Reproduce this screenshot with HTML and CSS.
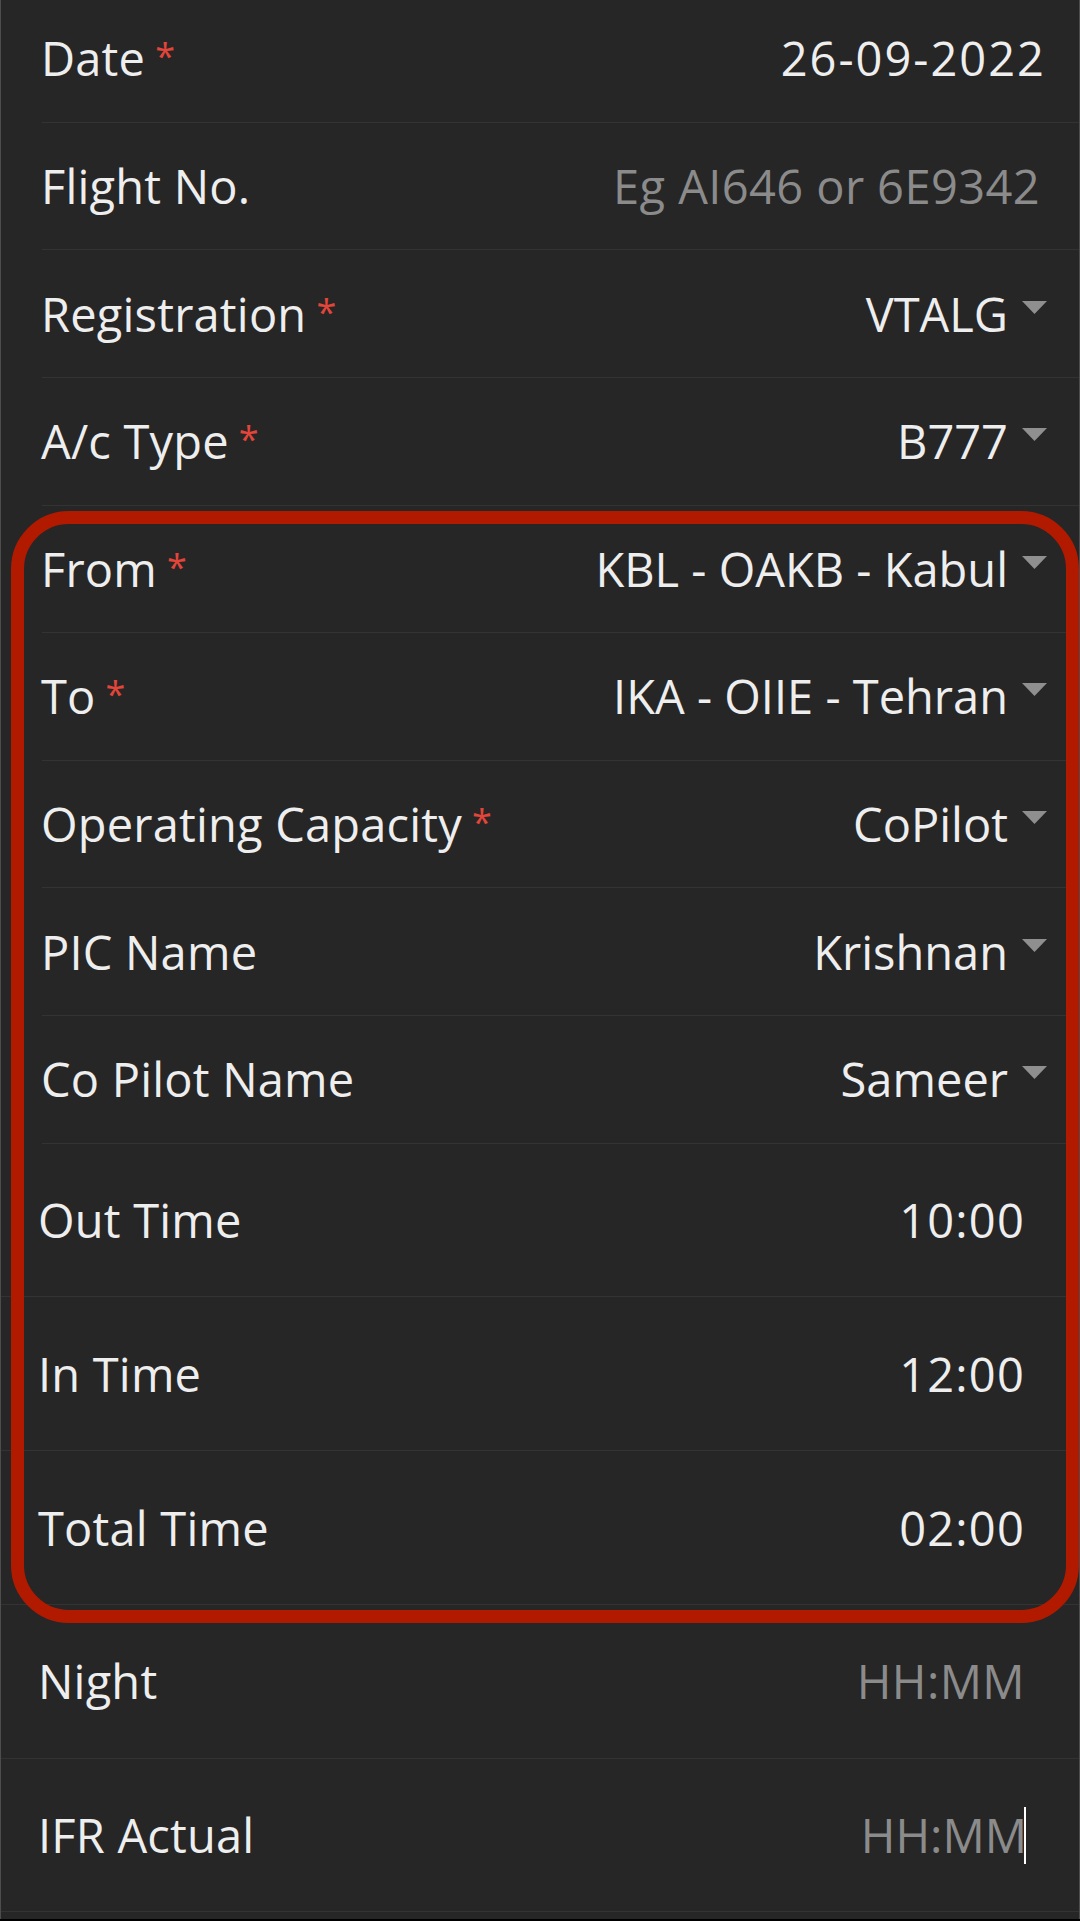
FILE: index.html
```html
<!DOCTYPE html>
<html lang="en">
<head>
<meta charset="utf-8">
<title>Flight Log Entry</title>
<link rel="stylesheet" href="styles.css">
</head>
<body>
<div class="screen">
  <div class="group group-top">
    <div class="row">
      <span class="label">Date<span class="req">*</span></span>
      <span class="value num">26-09-2022</span>
    </div>
    <div class="row">
      <span class="label">Flight No.</span>
      <span class="value placeholder">Eg AI646 or 6E9342</span>
    </div>
    <div class="row">
      <span class="label">Registration<span class="req">*</span></span>
      <span class="select"><span class="value">VTALG</span><svg class="caret" width="25" height="13" viewBox="0 0 25 13"><polygon points="0,0 25,0 12.5,13"/></svg></span>
    </div>
    <div class="row">
      <span class="label">A/c Type<span class="req">*</span></span>
      <span class="select"><span class="value">B777</span><svg class="caret" width="25" height="13" viewBox="0 0 25 13"><polygon points="0,0 25,0 12.5,13"/></svg></span>
    </div>
    <div class="row">
      <span class="label">From<span class="req">*</span></span>
      <span class="select"><span class="value">KBL - OAKB - Kabul</span><svg class="caret" width="25" height="13" viewBox="0 0 25 13"><polygon points="0,0 25,0 12.5,13"/></svg></span>
    </div>
    <div class="row">
      <span class="label">To<span class="req">*</span></span>
      <span class="select"><span class="value">IKA - OIIE - Tehran</span><svg class="caret" width="25" height="13" viewBox="0 0 25 13"><polygon points="0,0 25,0 12.5,13"/></svg></span>
    </div>
    <div class="row">
      <span class="label">Operating Capacity<span class="req">*</span></span>
      <span class="select"><span class="value">CoPilot</span><svg class="caret" width="25" height="13" viewBox="0 0 25 13"><polygon points="0,0 25,0 12.5,13"/></svg></span>
    </div>
    <div class="row">
      <span class="label">PIC Name</span>
      <span class="select"><span class="value">Krishnan</span><svg class="caret" width="25" height="13" viewBox="0 0 25 13"><polygon points="0,0 25,0 12.5,13"/></svg></span>
    </div>
    <div class="row">
      <span class="label">Co Pilot Name</span>
      <span class="select"><span class="value">Sameer</span><svg class="caret" width="25" height="13" viewBox="0 0 25 13"><polygon points="0,0 25,0 12.5,13"/></svg></span>
    </div>
  </div>
  <div class="group group-bottom">
    <div class="row">
      <span class="label">Out Time</span>
      <span class="value time">10:00</span>
    </div>
    <div class="row">
      <span class="label">In Time</span>
      <span class="value time">12:00</span>
    </div>
    <div class="row">
      <span class="label">Total Time</span>
      <span class="value time">02:00</span>
    </div>
    <div class="row">
      <span class="label">Night</span>
      <span class="value placeholder">HH:MM</span>
    </div>
    <div class="row">
      <span class="label">IFR Actual</span>
      <span class="input-focus"><span class="value placeholder">HH:MM</span><span class="cursor"></span></span>
    </div>
  </div>
  <div class="highlight"></div>
</div>
</body>
</html>
```

FILE: styles.css
```css
html, body {
  margin: 0;
  padding: 0;
  background: #000000;
}

body {
  width: 1080px;
  height: 1921px;
  overflow: hidden;
  font-family: "Open Sans", "Noto Sans", sans-serif;
  font-size: 47px;
  color: #eeeeee;
}

.screen {
  position: relative;
  box-sizing: border-box;
  width: 1080px;
  height: 1919px;
  background: #262626;
  border-left: 1px solid #4d4d4d;
  border-right: 1px solid #4d4d4d;
  overflow: hidden;
}

.group {
  display: flex;
  flex-direction: column;
}

.group-top {
  margin-top: -5px;
}

.row {
  box-sizing: border-box;
  display: flex;
  align-items: center;
  justify-content: space-between;
  border-bottom: 1px solid #333333;
  line-height: 64px;
  white-space: nowrap;
}

.group-top .row {
  height: 127.625px;
  margin-left: 41px;
  padding-right: 33px;
}

.group-top .label {
  margin-left: -1px;
}

.group-bottom .row {
  height: 153.75px;
  padding-left: 37px;
  padding-right: 54px;
}

.label {
  display: inline-flex;
  align-items: flex-start;
  letter-spacing: 0.2px;
}

.req {
  font-size: 36px;
  line-height: 64px;
  color: #e2453a;
  margin-left: 10px;
  position: relative;
  top: -2px;
}

.value {
  color: #eeeeee;
}

.num {
  letter-spacing: 2px;
}

.time {
  letter-spacing: 1.2px;
}

.placeholder {
  color: #8b8b8b;
  letter-spacing: 0.4px;
}

.group-top .placeholder {
  margin-right: 6px;
}

.select {
  display: flex;
  align-items: flex-start;
  margin-right: -1px;
}

.caret {
  display: block;
  margin-left: 14px;
  margin-top: 19px;
  fill: #8f8f8f;
}

.input-focus {
  display: flex;
  align-items: center;
  margin-right: -1px;
}

.input-focus .placeholder {
  letter-spacing: 0;
}

.cursor {
  display: block;
  width: 2px;
  height: 57px;
  margin-left: -3px;
  background: #ffffff;
}

.highlight {
  position: absolute;
  left: 10px;
  top: 511px;
  width: 1068px;
  height: 1112px;
  box-sizing: border-box;
  border: 13px solid #b21a00;
  border-radius: 58px;
  pointer-events: none;
}
```
